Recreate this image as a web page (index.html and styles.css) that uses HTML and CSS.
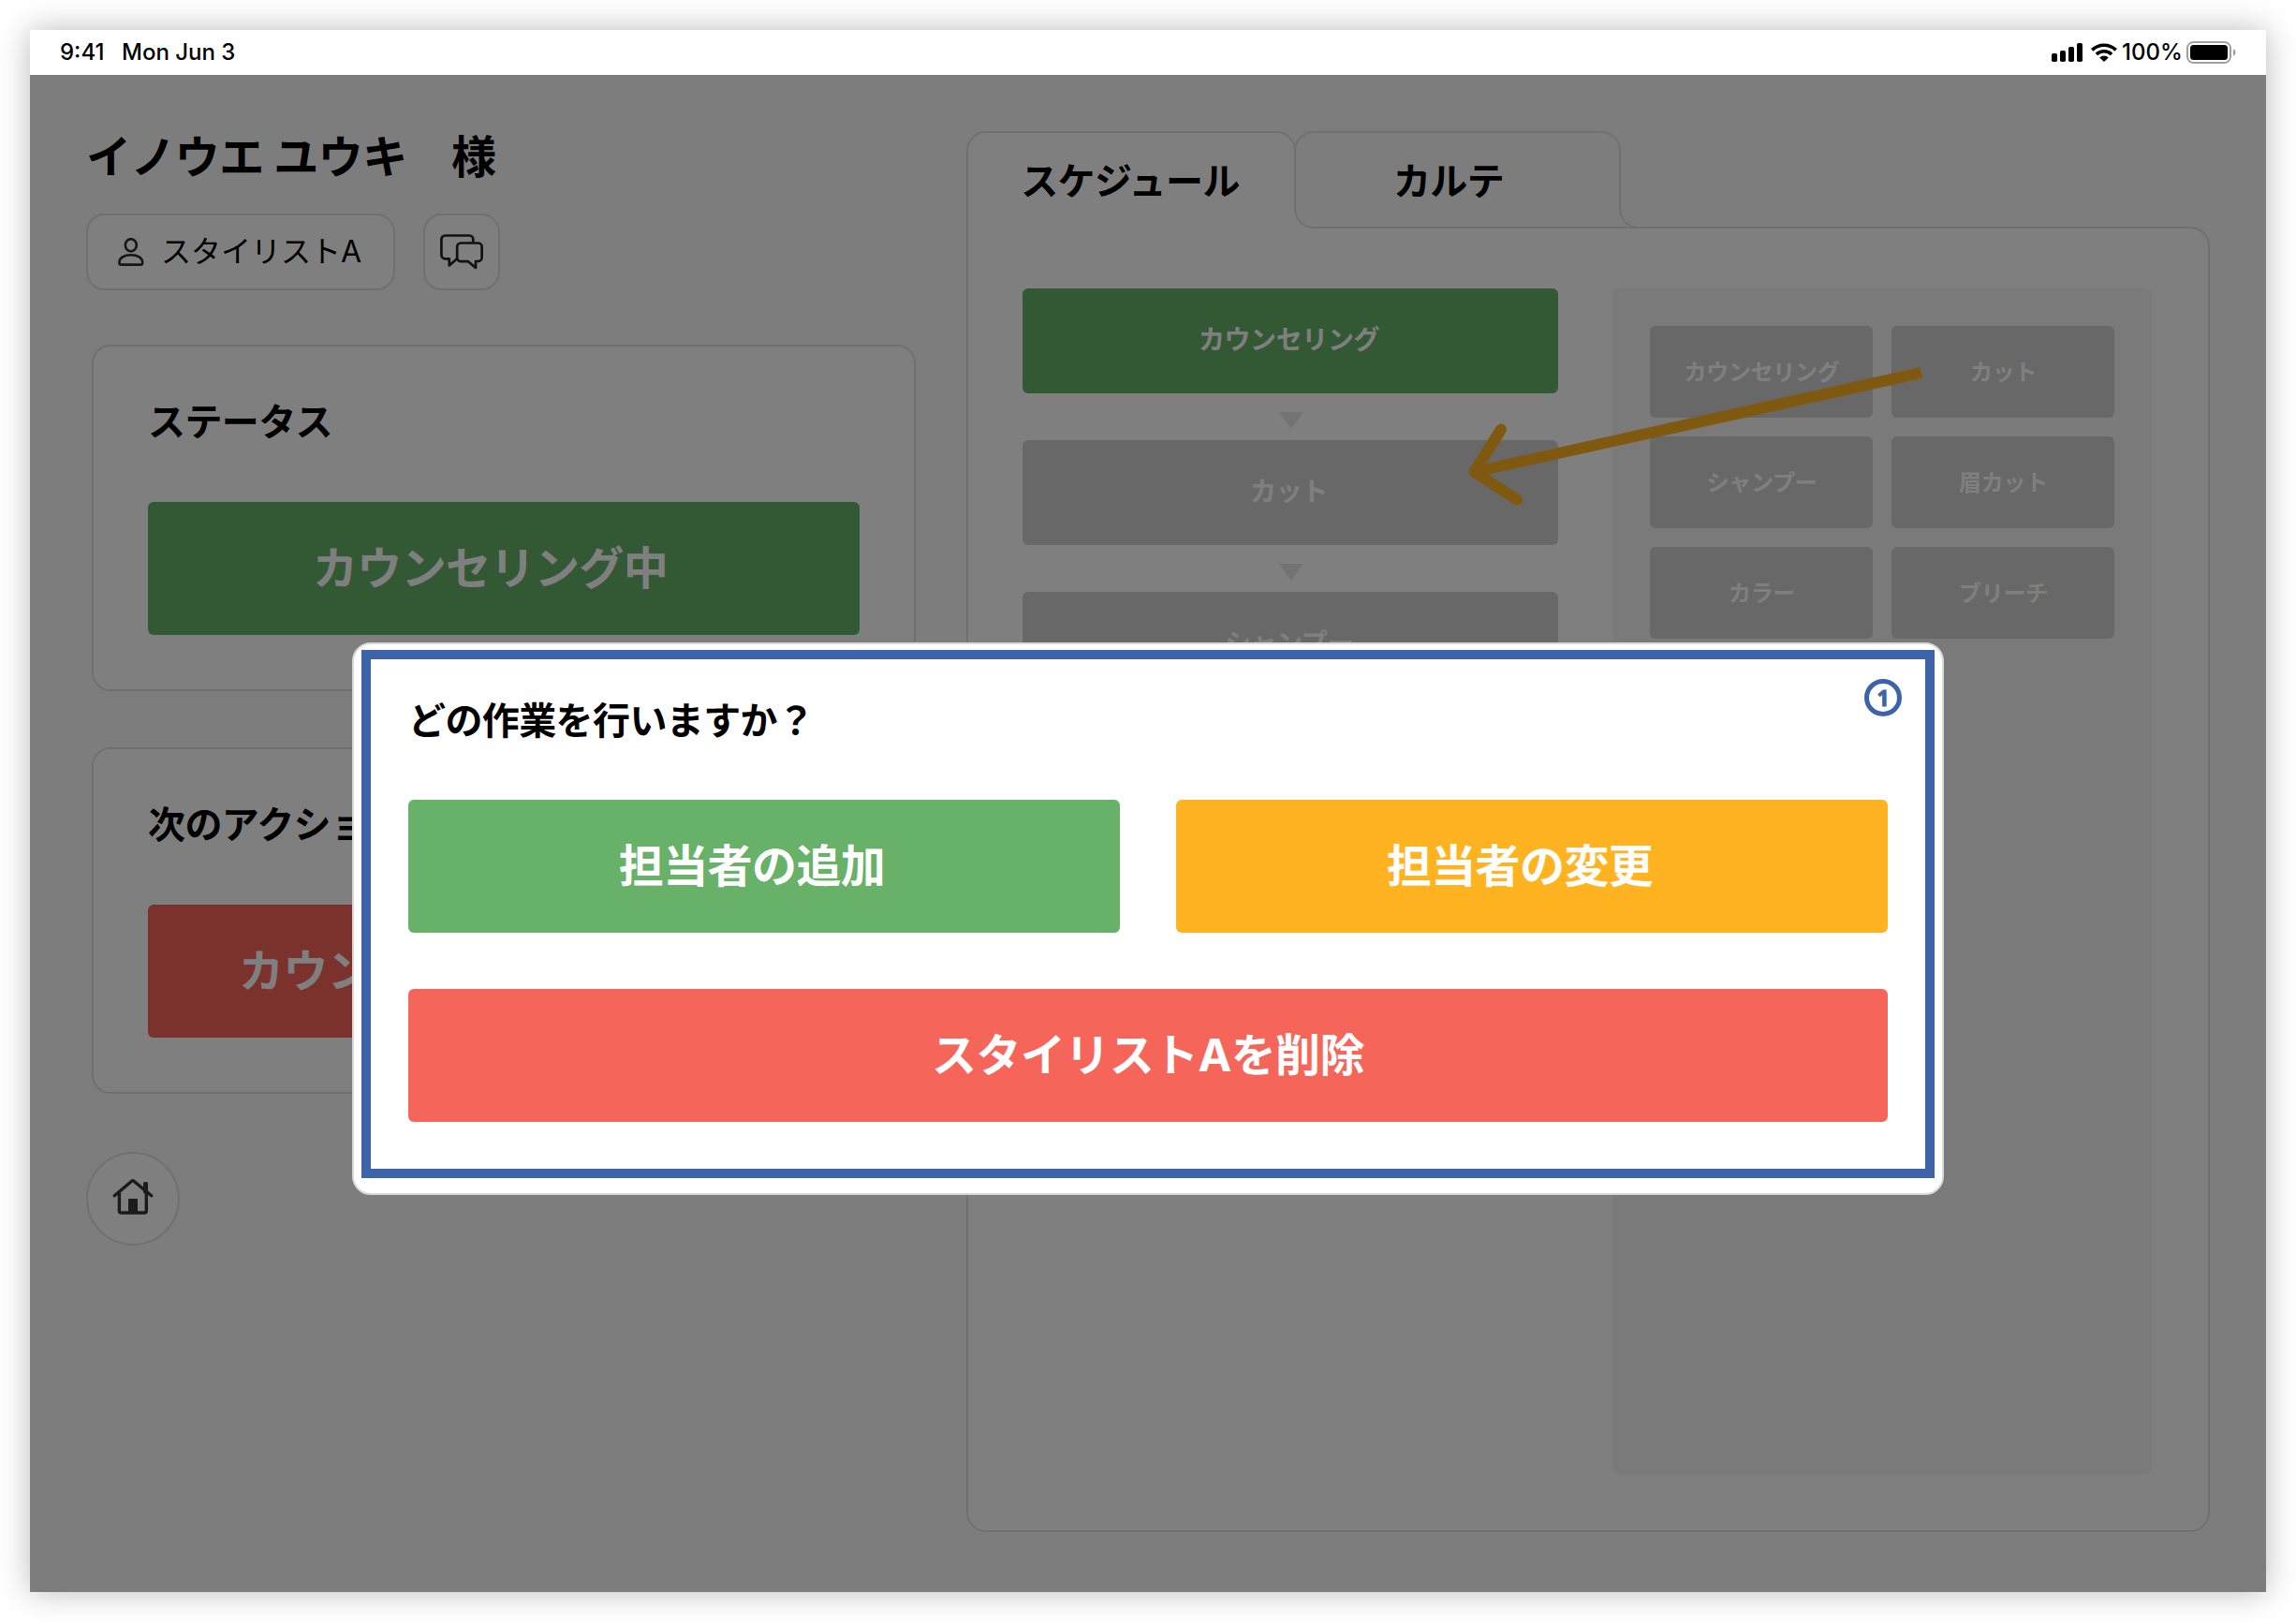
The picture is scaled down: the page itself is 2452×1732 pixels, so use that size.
FILE: index.html
```html
<!DOCTYPE html>
<html lang="ja">
<head>
<meta charset="utf-8">
<title>担当者の編集</title>
<link rel="stylesheet" href="styles.css">
</head>
<body>
<div class="screen">
  <header class="statusbar">
    <span class="time">9:41</span>
    <span class="date">Mon Jun 3</span>
    <svg class="signal" viewBox="0 0 33 20"><rect x="0" y="11" width="6" height="9" rx="1.8"/><rect x="9" y="8" width="6" height="12" rx="1.8"/><rect x="18" y="4" width="6" height="16" rx="1.8"/><rect x="27" y="0" width="6" height="20" rx="1.8"/></svg>
    <svg class="wifi" viewBox="0 0 28 20"><g fill="none" stroke="#000" stroke-width="3.6"><path d="M1.300 7.400a18.200 18.200 0 0 1 25.400 0"/><path d="M5.900 12a11.700 11.700 0 0 1 16.200 0"/></g><path d="M9.200 15.400a7 7 0 0 1 9.600 0L14 20z"/></svg>
    <span class="percent">100%</span>
    <svg class="battery" viewBox="0 0 54 24"><rect x="1" y="1" width="46" height="22" rx="6.5" fill="none" stroke="#a0a0a0" stroke-width="2"/><rect x="4" y="4" width="40" height="16" rx="3.5"/><path d="M50 8a4.400 4.400 0 0 1 0 8z" fill="#a0a0a0"/></svg>
  </header>

  <div class="app">
    <main class="content">
      <section class="left">
        <h1 class="customer">イノウエ ユウキ　様</h1>
        <div class="actions">
          <button class="pill">
            <svg class="icon-person" viewBox="0 0 28 30" fill="none" stroke="#2c2c2c" stroke-width="2.6"><ellipse cx="13.800" cy="7.800" rx="6" ry="6.600"/><path d="M1.400 26.400C1.400 21.500 6.700 18.200 13.800 18.200s12.400 3.300 12.400 8.200c0 1.600-.8 2.200-2 2.200H3.400c-1.200 0-2-.6-2-2.200z"/></svg>
            <span>スタイリストA</span>
          </button>
          <button class="chat">
            <svg class="icon-chat" viewBox="0 0 46 38" fill="none" stroke="#222" stroke-width="2.7" stroke-linejoin="round"><path d="M35.300 8.500V5.500a4 4 0 0 0-4-4H5.400a4 4 0 0 0-4 4V22.300a4 4 0 0 0 4 4H9.800V33.500L17.800 26.500"/><path d="M22.200 9.500H40.600a4 4 0 0 1 4 4V25a4 4 0 0 1-4 4H38V36L30 29.200H22.200a4 4 0 0 1-4-4V13.500a4 4 0 0 1 4-4z"/></svg>
          </button>
        </div>
        <section class="card">
          <h2>ステータス</h2>
          <button class="btn green btn-status">カウンセリング中</button>
        </section>
        <section class="card card-next">
          <h2>次のアクション</h2>
          <button class="btn red btn-next">カウンセリングを終了</button>
        </section>
        <button class="home">
          <svg viewBox="0 0 44 44"><path d="M2.300 18.800 20.600 3.300q1.200-1 2.400 0L41.700 18.800" fill="none" stroke="#363636" stroke-width="3.400" stroke-linecap="round"/><path d="M7.400 15.500V35q0 2 2 2H34.300q2 0 2-2V15.500" fill="none" stroke="#363636" stroke-width="3.400"/><rect x="33" y="4.200" width="5" height="12" rx="1" fill="#363636"/><rect x="17" y="22" width="10" height="14" rx="1" fill="#363636"/></svg>
        </button>
      </section>

      <section class="right">
        <svg class="outline" viewBox="0 0 1328 1496">
          <path d="M1 21a20 20 0 0 1 20-20H331a20 20 0 0 1 20 20V83a20 20 0 0 0 20 20H1307a20 20 0 0 1 20 20V1475a20 20 0 0 1-20 20H21a20 20 0 0 1-20-20z" fill="#fff" stroke="#e0e0e0" stroke-width="2"/>
          <path d="M351 21a20 20 0 0 1 20-20H678a20 20 0 0 1 20 20V83a20 20 0 0 0 20 20" fill="none" stroke="#e0e0e0" stroke-width="2"/>
        </svg>
        <div class="panel">
          <nav class="tabs">
            <span class="tab">スケジュール</span>
            <span class="tab tab-karte">カルテ</span>
          </nav>
          <div class="board">
            <div class="steps">
              <div class="step done">カウンセリング</div>
              <i class="caret"></i>
              <div class="step">カット</div>
              <i class="caret"></i>
              <div class="step">シャンプー</div>
            </div>
            <div class="palette">
              <div class="item">カウンセリング</div>
              <div class="item">カット</div>
              <div class="item">シャンプー</div>
              <div class="item">眉カット</div>
              <div class="item">カラー</div>
              <div class="item">ブリーチ</div>
            </div>
          </div>
        </div>
        <svg class="arrow" viewBox="0 0 500 100" fill="none" stroke="#ffb321" stroke-width="12"><path d="M484 -53 6 53"/><path d="M35 7.500 6.500 53 52 82.500" stroke-linecap="round" stroke-linejoin="round"/></svg>
      </section>
    </main>

    <div class="overlay">
      <div class="modal" role="dialog">
        <div class="frame">
          <span class="badge">1</span>
          <h2>どの作業を行いますか？</h2>
          <div class="choices">
            <button class="btn green">担当者の追加</button>
            <button class="btn orange">担当者の変更</button>
            <button class="btn red wide">スタイリストAを削除</button>
          </div>
        </div>
      </div>
    </div>
  </div>
</div>
</body>
</html>
```
FILE: styles.css
```css
* { box-sizing: border-box; }

body {
  margin: 0;
  padding: 32px;
  background: #fff;
  font-family: Inter, "Noto Sans CJK JP", sans-serif;
  color: #000;
}

h1, h2 { margin: 0; font-weight: 700; }

button {
  margin: 0;
  padding: 0;
  border: 0;
  font: inherit;
  color: inherit;
  background: none;
}

svg { display: block; flex: none; }

.screen {
  width: 2388px;
  height: 1668px;
  display: flex;
  flex-direction: column;
  box-shadow: 0 0 32px rgba(0, 0, 0, .27);
}

.statusbar {
  height: 48px;
  display: flex;
  align-items: center;
  padding: 0 31px 0 32px;
  background: #fff;
  font: 500 24px/48px Inter, sans-serif;
}

.time { width: 66px; }
.date { flex: 1; }
.signal { width: 33px; height: 20px; margin-right: 9px; }
.wifi { width: 28px; height: 20px; margin-right: 5px; }
.percent { width: 69px; }
.battery { width: 54px; height: 24px; }

.app { height: 1620px; display: grid; }
.content, .overlay { grid-area: 1 / 1; min-width: 0; min-height: 0; }

.content {
  display: flex;
  justify-content: space-between;
  padding: 60px;
  background: #fafafa;
}

.left { width: 886px; }

.customer {
  height: 56px;
  font-size: 48px;
  line-height: 56px;
  letter-spacing: -.6px;
}

.actions { display: flex; gap: 30px; margin: 32px 0 58px; }

.pill, .chat {
  height: 82px;
  display: flex;
  align-items: center;
  border: 2px solid #e0e0e0;
  border-radius: 20px;
  background: #fff;
}

.pill { width: 330px; padding-left: 32px; gap: 18px; font-size: 32px; line-height: 48px; }
.chat { width: 82px; justify-content: center; }
.icon-person { width: 28px; height: 30px; }
.icon-chat { width: 46px; height: 38px; }

.card {
  width: 880px;
  height: 370px;
  margin-left: 6px;
  padding: 50px 58px;
  border: 2px solid #e0e0e0;
  border-radius: 20px;
  background: #fff;
}

.card-next { margin-top: 60px; }

h2 { font-size: 40px; line-height: 62px; letter-spacing: -.6px; }
.card h2 { margin-bottom: 54px; }

.btn {
  width: 760px;
  height: 142px;
  padding-right: 26px;
  border-radius: 6px;
  color: #fff;
  font-size: 48px;
  font-weight: 700;
  line-height: 70px;
  letter-spacing: -.6px;
  white-space: nowrap;
}

.green { background: #67b169; }
.orange { background: #ffb321; }
.red { background: #f6655a; }
.wide { width: 1580px; padding: 0; }
.btn-status { padding-right: 29px; }
.btn-next { padding-left: 97px; text-align: left; }

.home {
  width: 100px;
  height: 100px;
  margin-top: 62px;
  display: grid;
  place-items: center;
  border: 2px solid #e0e0e0;
  border-radius: 50%;
  background: #fff;
}

.home svg { width: 44px; height: 44px; }

.right { position: relative; width: 1328px; height: 1496px; display: grid; }
.outline, .panel { grid-area: 1 / 1; }
.outline { width: 1328px; height: 1496px; }

.tabs { display: flex; height: 104px; padding-top: 2px; }
.tab {
  width: 350px;
  text-align: center;
  font-size: 40px;
  font-weight: 700;
  line-height: 104px;
  letter-spacing: -.6px;
}
.tab-karte { padding-right: 20px; }

.board { display: flex; gap: 58px; padding: 64px 60px 0; }
.steps { width: 572px; }

.step, .item {
  display: grid;
  place-items: center;
  border-radius: 6px;
  background: #d1d1d1;
  color: #fff;
  font-weight: 700;
}

.step { height: 112px; padding: 0 3px 2px 0; font-size: 28px; line-height: 40px; letter-spacing: -.4px; }
.done { background: #67b169; }

.caret {
  display: block;
  width: 26px;
  height: 18px;
  margin: 20px 0 12px 274px;
  background: #e6e6e6;
  clip-path: polygon(0 0, 100% 0, 50% 100%);
}

.palette {
  width: 576px;
  height: 1266px;
  padding: 40px;
  display: grid;
  grid-template-columns: 1fr 1fr;
  grid-auto-rows: 98px;
  align-content: start;
  gap: 20px;
  border-radius: 6px;
  background: #f4f4f4;
}

.item { padding: 2px 0 0 1px; font-size: 24px; line-height: 36px; letter-spacing: -.3px; }

/* drag hint from the palette to the schedule */
.arrow {
  position: absolute;
  left: 536px;
  top: 311px;
  width: 500px;
  height: 100px;
  overflow: visible;
}

.overlay {
  position: relative;
  display: flex;
  justify-content: center;
  align-items: flex-start;
  padding-top: 606px;
  background: rgba(0, 0, 0, .5);
}

.modal {
  width: 1700px;
  height: 590px;
  padding: 6px 8px;
  border: 2px solid #d9d9d9;
  border-radius: 20px;
  background: #fff;
}

.frame {
  position: relative;
  height: 564px;
  padding: 26px 40px 0;
  border: 10px solid #3d64a8;
}

.frame h2 { height: 124px; line-height: 80px; }
.choices { display: flex; flex-wrap: wrap; gap: 60px; }

.badge {
  position: absolute;
  top: 21px;
  right: 25px;
  width: 40px;
  height: 40px;
  border: 5px solid #3d64a8;
  border-radius: 50%;
  color: #3d64a8;
  font: 700 23px/30px "Open Sans", sans-serif;
  text-align: center;
  -webkit-text-stroke: 1px #3d64a8;
  stroke-linejoin: round;
}
```
